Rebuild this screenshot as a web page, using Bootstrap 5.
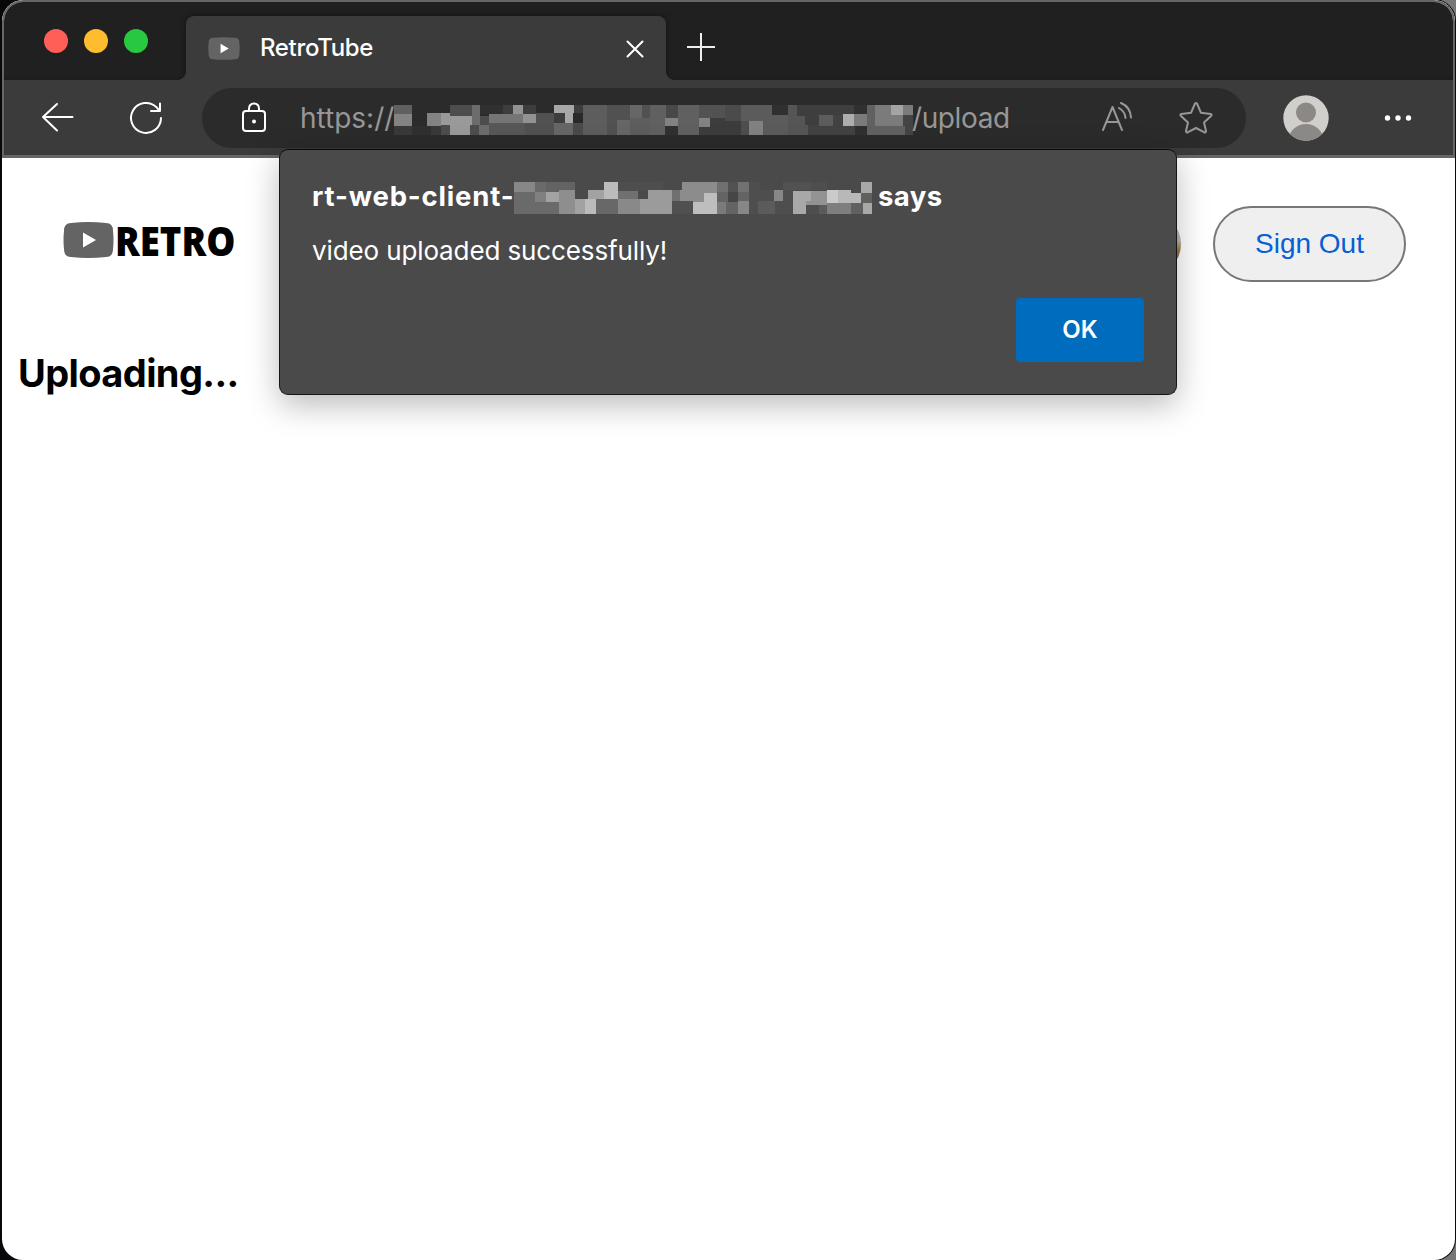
<!DOCTYPE html>
<html lang="en">
<head>
<meta charset="utf-8">
<meta name="viewport" content="width=device-width, initial-scale=1">
<title>RetroTube</title>
<link href="https://cdn.jsdelivr.net/npm/bootstrap@5.3.0/dist/css/bootstrap.min.css" rel="stylesheet">
<style>
  body { font-family: Inter, "Liberation Sans", sans-serif; background: linear-gradient(90deg, #08080b 50%, #77777a 50%); height: 1260px; overflow: hidden; }
  svg { display: block; flex: none; }
  .window { width: 1453px; height: 1260px; margin-left: 2px; border-radius: 21px; background: #fff; box-shadow: 0 0 0 1px #0a0a0a; }
  .chrome { border: 2px solid #666; border-bottom: 0; border-radius: 21px 21px 0 0; }
  .tabstrip { height: 78px; background: linear-gradient(#202020 90%, #1d1d1d); padding: 14px 0 0 40px; }
  .lights { gap: 16px; width: 142px; height: 50px; }
  .light { width: 24px; height: 24px; border-radius: 50%; }
  .tab { width: 480px; height: 64px; background: #3b3b3b; border-radius: 8px 8px 0 0; padding: 0 21px 0 22px; position: relative; box-shadow: 0 0 6px rgba(0,0,0,.45); clip-path: inset(-8px -8px 0 -8px); }
  .tab::before, .tab::after { content: ""; position: absolute; bottom: 0; width: 8px; height: 8px; }
  .tab::before { left: -8px; background: radial-gradient(circle at 0 0, transparent 7.5px, #3b3b3b 8px); }
  .tab::after { right: -8px; background: radial-gradient(circle at 100% 0, transparent 7.5px, #3b3b3b 8px); }
  .tab-name { font-size: 24px; margin-left: 20px; line-height: 64px; letter-spacing: -.35px; font-weight: 450; }
  .toolbar { height: 78px; background: #3b3b3b; border-bottom: 3px solid #666; padding: 8px 0 7px 36px; color: #fff; }
  .address { width: 1044px; height: 60px; border-radius: 30px; background: #2b2b2b; color: #979797; padding: 0 32px 0 38px; font-size: 28px; margin-left: 38px; }
  .url-path { letter-spacing: -.4px; margin-left: -1px; }
  .wordmark { font: 800 40px/48px "Open Sans", sans-serif; color: #000; transform-origin: 0 50%; transform: scaleX(.915); margin: -7px 0 0 1px; }
  .signout { width: 193px; height: 76px; border: 2px solid #777; border-radius: 38px; background: #efefef; color: #065fd4; font: 28px "Liberation Sans", Arial, sans-serif; padding: 0 0 1px; }
  .photo { width: 64px; height: 64px; border-radius: 50%; background: linear-gradient(#b9b7ae 45%, #9b7946 60%, #77552a); margin-right: 32px; }
  .masthead { height: 172px; padding: 0 49px 0 61px; }
  .status { font-size: 38px; font-weight: 750; color: #000; line-height: 46px; margin: 20px 0 0 16px; letter-spacing: -.6px; }
  .alert-box { position: absolute; left: 279px; top: 149px; width: 898px; height: 246px; border: 1px solid #161616; border-top-color: #080808; border-radius: 9px; background: #4a4a4a; color: #fff; padding: 31px 32px; box-shadow: 0 10px 32px rgba(0,0,0,.27); }
  .origin { font-size: 27.5px; font-weight: 750; line-height: 32px; height: 32px; letter-spacing: .82px; }
  .origin svg { margin-top: 1px; }
  .origin span { margin-top: -1px; }
  .origin .says { letter-spacing: .4px; margin-left: 6px; }
  .message { font-size: 26px; line-height: 32px; margin-top: 22px; letter-spacing: -.12px; }
  .ok { width: 128px; height: 64px; background: #006cbe; border-radius: 4px; font-size: 24px; font-weight: 600; color: #fff; border: 0; margin-top: 31px; }
</style>
<script src="https://cdn.jsdelivr.net/npm/bootstrap@5.3.0/dist/js/bootstrap.bundle.min.js"></script>
</head>
<body>
<div class="window overflow-hidden">
  <header class="chrome overflow-hidden">
    <div class="tabstrip d-flex">
      <div class="lights d-flex align-items-center">
        <span class="light" style="background:#ff5f57"></span>
        <span class="light" style="background:#febc2e"></span>
        <span class="light" style="background:#28c840"></span>
      </div>
      <div class="tab d-flex align-items-center text-white">
        <svg width="32" height="23" viewBox="0 0 51 36"><path d="M8 1Q25-1 43 1Q50 1 50 9Q51 18 50 27Q50 35 43 35Q25 37 8 35Q1 35 1 27Q0 18 1 9Q1 1 8 1Z" fill="#646464"/><path d="M20 10.500L33 18L20 25.500Z" fill="#fff"/></svg>
        <span class="tab-name">RetroTube</span>
        <svg class="ms-auto" width="20" height="20" viewBox="0 0 20 20" stroke="#fff" stroke-width="2" stroke-linecap="round"><path d="M2.500 3.500L17.500 18.500M17.500 3.500L2.500 18.500"/></svg>
      </div>
      <svg width="28" height="28" viewBox="0 0 28 28" style="margin:17px 0 0 21px" stroke="#eee" stroke-width="2"><path d="M14 0V28M0 14H28"/></svg>
    </div>
    <div class="toolbar d-flex align-items-center">
      <svg width="36" height="34" viewBox="0 0 36 34" fill="none" stroke="#fff" stroke-width="2" stroke-linecap="round" stroke-linejoin="round"><path d="M32.500 16H3M17 3L3 16L17 29.500"/></svg>
      <svg width="36" height="36" viewBox="0 0 36 36" style="margin-left:52px" fill="none" stroke="#fff" stroke-width="2" stroke-linecap="round" stroke-linejoin="round"><path d="M33 18A15 15 0 1 1 28.600 7.300L31.500 10.500M32 3.500V11H23"/></svg>
      <div class="address d-flex align-items-center">
        <svg width="28" height="34" viewBox="0 0 28 34" fill="none" stroke="#fff" stroke-width="2"><rect x="3" y="10" width="22" height="20" rx="3"/><path d="M9 10V8Q9 2.500 14 2.500T19 8V10"/><circle cx="14" cy="20.500" r="2" fill="#fff" stroke="none"/></svg>
        <span style="margin-left:32px;width:94px">https://</span>
        <svg width="519" height="30" viewBox="42 45 1557 90" style="margin-top:3px" shape-rendering="crispEdges">
          <path fill="#606060" d="M42 45h54v27H42z"/><path fill="#838383" d="M42 72h54v36H42zM141 69h42v39h-42z"/><path fill="#393939" d="M42 108h54v27H42zM153 108h30v27h-30z"/><path fill="#303030" d="M96 108h57v27H96z"/>
          <path fill="#999" d="M183 69h27v36h-27zM210 78h66v27h-66zM210 105h60v30h-60z"/><path fill="#4d4d4d" d="M183 105h27v30h-27zM270 105h27v30h-27zM210 45h66v33h-66zM300 78h27v27h-27z"/><path fill="#6c6c6c" d="M276 45h24v33h-24zM276 78h24v27h-24zM297 105h30v30h-30z"/>
          <path fill="#303030" d="M300 45h69v27h-69z"/><path fill="#3d3d3d" d="M369 45h30v27h-30zM429 45h39v27h-39zM522 69h33v30h-33zM582 45h27v24h-27z"/><path fill="#929292" d="M399 45h30v27h-30zM429 72h39v27h-39z"/><path fill="#757575" d="M327 72h102v27H327z"/><path fill="#575757" d="M327 99h108v36H327z"/><path fill="#515151" d="M468 69h54v66h-87V99h33z"/>
          <path fill="#a7a7a7" d="M522 45h60v24h-3v30h-24V69h-33z"/><path fill="#666" d="M522 99h57v36h-57z"/><path fill="#4a4a4a" d="M579 99h30v36h-30z"/><path fill="#292929" d="M579 69h30v30h-30z"/>
          <path fill="#5d5d5d" d="M609 45h201v90H609z"/><path fill="#515151" d="M681 45h69v45h-39v45h-30zM786 45h30v39h-30z"/><path fill="#666" d="M711 90h39v45h-39zM750 45h36v39h-36z"/>
          <path fill="#606060" d="M810 45h48v39h-3v51h-45zM894 45h63v90h-63z"/><path fill="#484848" d="M858 45h36v39h-36z"/><path fill="#828282" d="M855 84h39v24h-39zM957 84h33v27h-33z"/><path fill="#303030" d="M855 108h39v27h-39z"/><path fill="#525252" d="M957 45h78v39h-78z"/><path fill="#3c3c3c" d="M957 111h33V84h45v9h48v42H957z"/><path fill="#4b4b4b" d="M1035 45h48v48h-48z"/>
          <path fill="#5b5b5b" d="M1083 45h93v30h48v60h-75V93h-66z"/><path fill="#4e4e4e" d="M1083 93h24v42h-24z"/><path fill="#818181" d="M1107 93h42v42h-42z"/><path fill="#303030" d="M1176 45h48v30h-48zM1422 45h39v27h-39zM1425 108h36v27h-36z"/><path fill="#555" d="M1224 45h27v33h24v27h9v30h-60z"/><path fill="#3e3e3e" d="M1251 45h171v27h-33v3h-72v30h-42V78h-24z"/><path fill="#5c5c5c" d="M1317 75h42v33h-42z"/><path fill="#424242" d="M1359 75h30v33h36v27h-141v-30h33v3h42z"/>
          <path fill="#adadad" d="M1389 72h33v36h-33z"/><path fill="#7b7b7b" d="M1422 72h39v36h-39zM1485 45h48v30h36v33h-84zM1569 45h30v30h-30z"/><path fill="#616161" d="M1461 45h24v63h90v27h-114z"/><path fill="#a4a4a4" d="M1533 45h36v30h-36z"/><path fill="#444" d="M1569 75h30v60h-24v-27h-6z"/>
        </svg>
        <span class="url-path">/upload</span>
        <svg class="ms-auto" width="34" height="32" viewBox="0 0 34 32" fill="none" stroke="#979797" stroke-width="2" stroke-linecap="round" stroke-linejoin="round"><path d="M3 28L12.500 5L22 28M6.500 20H18.500M19 6Q25 9.500 25.500 16M21 1Q30.500 5 31 15.500"/></svg>
        <svg style="margin-left:44px" width="36" height="34" viewBox="0 0 36 34" fill="none" stroke="#979797" stroke-width="2" stroke-linejoin="round"><path d="M16.800 3Q18 1 19.200 3L23 11.800L32.500 13Q34.500 13.500 33 15L26 21.500L28 30Q28 32 26 31.200L18 27L10 31.200Q8 32 8 30L10 21.500L3 15Q1.500 13.500 3.500 13L13 11.800Z"/></svg>
      </div>
      <svg width="46" height="46" viewBox="0 0 46 46" style="margin-left:37px"><defs><clipPath id="disc"><circle cx="23" cy="23" r="22.700"/></clipPath></defs><g clip-path="url(#disc)"><path fill="#d1cfcb" d="M0 0h46v46H0z"/><circle cx="23" cy="17.500" r="10" fill="#8c8885"/><circle cx="23" cy="47" r="18" fill="#8c8885"/></g></svg>
      <svg width="28" height="8" viewBox="0 0 28 8" style="margin-left:55px" fill="#fff"><circle cx="3.500" cy="4" r="2.700"/><circle cx="14" cy="4" r="2.700"/><circle cx="24.500" cy="4" r="2.700"/></svg>
    </div>
  </header>
  <main>
    <div class="masthead d-flex align-items-center">
      <svg width="51" height="36" viewBox="0 0 51 36" style="margin-top:-8px"><path d="M8 1Q25-1 43 1Q50 1 50 9Q51 18 50 27Q50 35 43 35Q25 37 8 35Q1 35 1 27Q0 18 1 9Q1 1 8 1Z" fill="#646464"/><path d="M20 10.500L33 18L20 25.500Z" fill="#fff"/></svg>
      <span class="wordmark">RETRO</span>
      <div class="photo ms-auto"></div>
      <button class="btn signout">Sign Out</button>
    </div>
    <h1 class="status">Uploading...</h1>
  </main>
</div>
<div class="alert-box d-flex flex-column" role="dialog">
  <div class="origin d-flex flex-shrink-0 text-nowrap">
    <span style="width:202px">rt-web-client-</span>
    <svg width="358" height="32" viewBox="42 36 1074 96" shape-rendering="crispEdges">
      <path fill="#878787" d="M42 36h63v30H42z"/><path fill="#6a6a6a" d="M42 66h63V36h33v30h-33v30h72v36H42z"/><path fill="#636363" d="M138 36h87v24h-48v6h-39z"/><path fill="#808080" d="M105 66h33v30h-33z"/><path fill="#a2a2a2" d="M138 66h39v30h-39zM225 87h30v45h-30zM264 60h48v27h-48z"/><path fill="#8e8e8e" d="M177 60h48v72h-48z"/><path fill="#bbb" d="M255 87h33v45h-33zM312 36h42v51h-42z"/><path fill="#686868" d="M288 87h66v45h-66z"/><path fill="#4e4e4e" d="M354 36h135v24h-45v3h-90z"/><path fill="#707070" d="M354 63h60v24h-60zM516 60h24v33h-24z"/><path fill="#898989" d="M354 87h66v45h-66z"/><path fill="#9b9b9b" d="M420 87h24V60h72v72h-96z"/><path fill="#8c8c8c" d="M546 36h105v33h-39v27h-33v-3h-39V60h6z"/><path fill="#505050" d="M516 93h63v39h-63z"/><path fill="#bebebe" d="M579 96h33V69h39v63h-72z"/>
      <path fill="#707070" d="M651 36h33v30h-33z"/><path fill="#646464" d="M651 66h33v30h-33zM714 66h33v27h-33zM678 96h36v36h-36z"/><path fill="#7b7b7b" d="M651 96h27v36h-27z"/><path fill="#525252" d="M684 36h30v30h-30zM849 36h84v24h-84z"/><path fill="#464646" d="M684 66h30v30h-30z"/><path fill="#727272" d="M714 36h33v30h-33z"/><path fill="#878787" d="M714 93h33v39h-33zM822 60h27v33h-27z"/><path fill="#4e4e4e" d="M747 36h34v24h41v33h27V60h30v72h-132zM933 36h48v24h-48zM918 105h39v27h-39z"/><path fill="#5b5b5b" d="M774 93h51v39h-51zM957 105h24v27h-24z"/><path fill="#a8a8a8" d="M879 63h54v42h-15v27h-39zM1083 36h33v33h-33zM1089 99h27v33h-27z"/><path fill="#939393" d="M933 63h48v42h-63V93h15z"/><path fill="#cacaca" d="M981 60h33v39h-33z"/><path fill="#b8b8b8" d="M1014 60h39v9h30v30h-69z"/><path fill="#7e7e7e" d="M981 99h72v33h-72z"/><path fill="#606060" d="M1053 99h30V69h33v30h-27v33h-36z"/>
    </svg>
    <span class="says">says</span>
  </div>
  <div class="message">video uploaded successfully!</div>
  <button class="btn ok p-0 align-self-end flex-shrink-0">OK</button>
</div>
</body>
</html>
